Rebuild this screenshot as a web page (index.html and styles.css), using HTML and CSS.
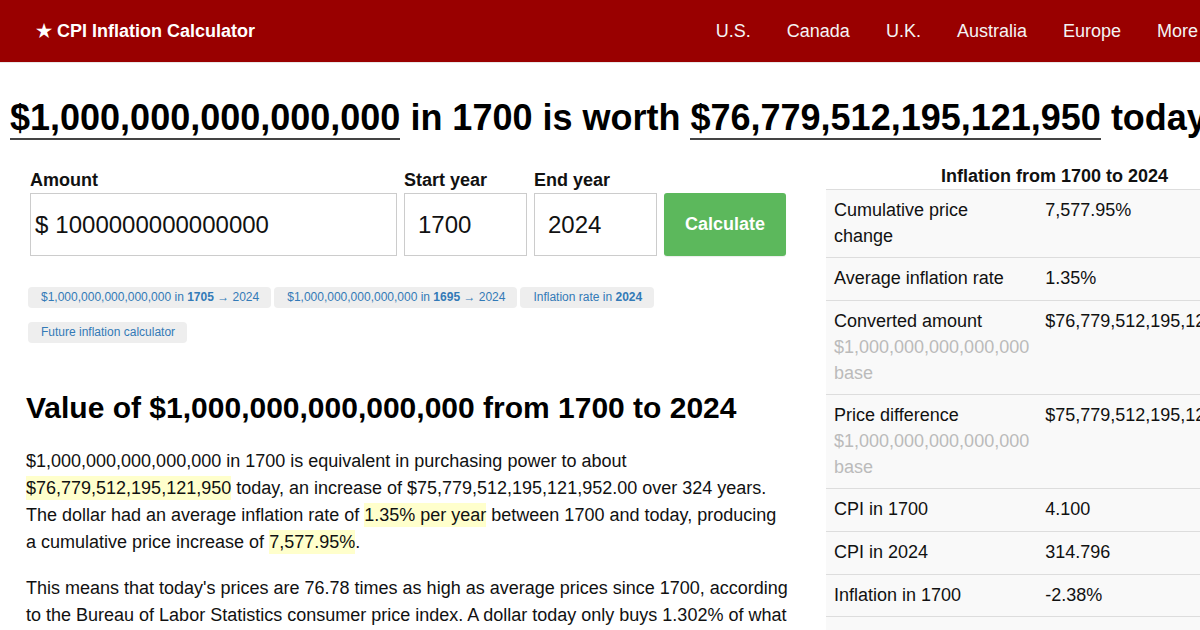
FILE: index.html
```html
<!DOCTYPE html>
<html lang="en">
<head>
<meta charset="utf-8">
<title>CPI Inflation Calculator</title>
<link rel="stylesheet" href="styles.css">
</head>
<body>
<div class="page">
  <header class="topbar">
    <a class="brand" href="#">★ CPI Inflation Calculator</a>
    <nav class="nav">
      <a href="#">U.S.</a>
      <a href="#">Canada</a>
      <a href="#">U.K.</a>
      <a href="#">Australia</a>
      <a href="#">Europe</a>
      <a href="#">More</a>
    </nav>
  </header>

  <h1 class="headline"><span class="ul">$1,000,000,000,000,000</span> in 1700 is worth <span class="ul">$76,779,512,195,121,950</span> today</h1>

  <div class="columns">
    <div class="main-col">
      <form class="calc">
        <div class="field">
          <label class="lbl">Amount</label>
          <div class="box box-amount"><span class="cur">$</span><input class="inp" type="text" value="1000000000000000"></div>
        </div>
        <div class="field">
          <label class="lbl">Start year</label>
          <div class="box box-year"><input class="inp" type="text" value="1700"></div>
        </div>
        <div class="field">
          <label class="lbl">End year</label>
          <div class="box box-year"><input class="inp" type="text" value="2024"></div>
        </div>
        <div class="field">
          <span class="lbl">&nbsp;</span>
          <button class="btn" type="button">Calculate</button>
        </div>
      </form>

      <div class="chips">
        <a class="chip" href="#">$1,000,000,000,000,000 in <b>1705</b> → 2024</a>
        <a class="chip" href="#">$1,000,000,000,000,000 in <b>1695</b> → 2024</a>
        <a class="chip" href="#">Inflation rate in <b>2024</b></a>
        <a class="chip" href="#">Future inflation calculator</a>
      </div>

      <h2 class="sub">Value of $1,000,000,000,000,000 from 1700 to 2024</h2>
      <p class="text">$1,000,000,000,000,000 in 1700 is equivalent in purchasing power to about <span class="hl">$76,779,512,195,121,950</span> today, an increase of $75,779,512,195,121,952.00 over 324 years. The dollar had an average inflation rate of <span class="hl">1.35% per year</span> between 1700 and today, producing a cumulative price increase of <span class="hl">7,577.95%</span>.</p>
      <p class="text">This means that today's prices are 76.78 times as high as average prices since 1700, according to the Bureau of Labor Statistics consumer price index. A dollar today only buys 1.302% of what could be bought in 1700.</p>
    </div>

    <aside class="side-col">
      <table class="stats">
        <caption>Inflation from 1700 to 2024</caption>
        <tbody>
          <tr><td class="k">Cumulative price change</td><td>7,577.95%</td></tr>
          <tr><td class="k">Average inflation rate</td><td>1.35%</td></tr>
          <tr><td class="k">Converted amount <span class="muted">$1,000,000,000,000,000 base</span></td><td>$76,779,512,195,121,950</td></tr>
          <tr><td class="k">Price difference <span class="muted">$1,000,000,000,000,000 base</span></td><td>$75,779,512,195,121,952</td></tr>
          <tr><td class="k">CPI in 1700</td><td>4.100</td></tr>
          <tr><td class="k">CPI in 2024</td><td>314.796</td></tr>
          <tr><td class="k">Inflation in 1700</td><td>-2.38%</td></tr>
          <tr><td class="k">Inflation in 2024</td><td>2.95%</td></tr>
        </tbody>
      </table>
    </aside>
  </div>
</div>
</body>
</html>
```

FILE: styles.css
```css
html, body {
  margin: 0;
  padding: 0;
  overflow: hidden;
  background: #fff;
}

body {
  font-family: "Liberation Sans", Arial, sans-serif;
  color: #111;
}

.page {
  width: 1300px;
}

.topbar {
  display: flex;
  align-items: center;
  height: 62px;
  background: #990000;
  border-bottom: 1px solid #e8e8e8;
  padding: 0 102px 0 36px;
}

.brand {
  color: #fff;
  font-weight: bold;
  font-size: 18px;
  text-decoration: none;
}

.nav {
  display: flex;
  gap: 36px;
  margin-left: auto;
}

.nav a {
  color: #f4f4f4;
  font-size: 18px;
  text-decoration: none;
}

.headline {
  margin: 35px 0 0;
  padding-left: 10px;
  font-size: 36px;
  line-height: 40px;
  font-weight: bold;
  white-space: nowrap;
  color: #000;
}

.ul {
  border-bottom: 2px solid #444;
}

.columns {
  display: flex;
  gap: 36px;
  margin-top: 24px;
  padding-left: 26px;
}

.main-col {
  width: 764px;
  flex: none;
}

.side-col {
  width: 457px;
  flex: none;
  padding-top: 1px;
}

.calc {
  display: flex;
  gap: 7px;
  padding-left: 4px;
  padding-top: 7px;
  margin: 0;
}

.field {
  display: flex;
  flex-direction: column;
}

.lbl {
  font-size: 18px;
  font-weight: bold;
  line-height: 22px;
  margin-bottom: 2px;
  color: #111;
}

.box {
  display: flex;
  align-items: center;
  height: 63px;
  box-sizing: border-box;
  border: 1px solid #ccc;
  background: #fff;
  font-size: 24px;
  padding-top: 1px;
}

.box-amount {
  width: 367px;
  padding-left: 4px;
}

.cur {
  margin-right: 7px;
}

.box-year {
  width: 123px;
  padding-left: 13px;
}

.inp {
  border: 0;
  outline: none;
  padding: 0;
  margin: 0;
  width: 100%;
  font: inherit;
  color: #111;
  background: transparent;
}

.btn {
  width: 122px;
  height: 63px;
  border: 0;
  border-radius: 3px;
  background: #5cb85c;
  color: #fff;
  font-family: inherit;
  font-size: 18px;
  font-weight: bold;
  box-shadow: 0 1px 1px rgba(0,0,0,0.08);
}

.chips {
  display: flex;
  flex-wrap: wrap;
  column-gap: 3px;
  row-gap: 14px;
  margin-top: 31px;
  padding-left: 2px;
}

.chip {
  display: inline-block;
  background: #eee;
  border-radius: 4px;
  color: #337ab7;
  font-size: 12px;
  line-height: 21px;
  padding: 0 12px 0 13px;
  text-decoration: none;
}

.sub {
  margin: 47px 0 0;
  font-size: 30px;
  line-height: 36px;
  font-weight: bold;
  color: #000;
}

.text {
  margin: 22px 0 0;
  font-size: 18px;
  line-height: 27px;
}

.text + .text {
  margin-top: 19px;
}

.hl {
  background: #ffffcc;
  padding: 2px 0;
}

.stats {
  width: 457px;
  border-collapse: collapse;
  font-size: 18px;
  line-height: 1.42857;
}

.stats caption {
  font-weight: bold;
  line-height: 26px;
  text-align: center;
}

.stats td {
  padding: 8px;
  vertical-align: top;
  background: #f9f9f9;
  border-top: 1px solid #ddd;
  border-bottom: 1px solid #ddd;
}

.stats td.k {
  width: 195px;
}

.muted {
  color: #bbb;
}
```
